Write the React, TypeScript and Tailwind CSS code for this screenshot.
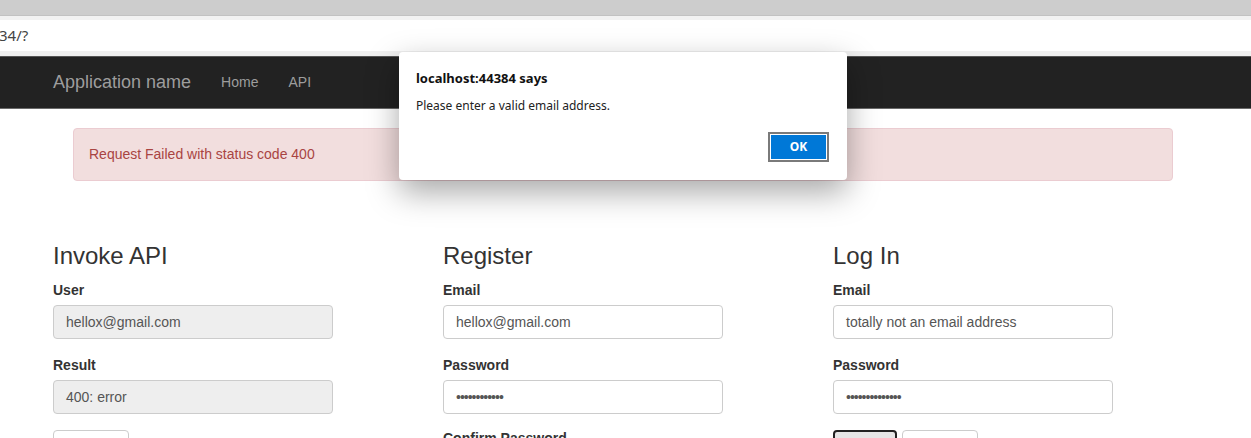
import React from "react";

const sans = "font-['Liberation_Sans',Arial,sans-serif]";
const ui = "font-['Noto_Sans','Open_Sans',sans-serif]";

function Field({ label, value, disabled = false, password = false }: { label: string; value: string; disabled?: boolean; password?: boolean }) {
  return (
    <div className="mb-[16px]">
      <label className="block text-[14px] leading-[20px] font-bold text-[#333] mb-[5px]">{label}</label>
      <div
        className={`w-[280px] h-[34px] px-[12px] flex items-center rounded-[4px] border border-[#ccc] text-[14px] text-[#555] ${
          disabled ? "bg-[#eee]" : "bg-white"
        } ${password ? "tracking-[-1px] text-[11px]" : ""}`}
      >
        {value}
      </div>
    </div>
  );
}

function Btn({ children, w, focus = false }: { children: React.ReactNode; w: string; focus?: boolean }) {
  return (
    <div
      className={`${w} h-[34px] rounded-[4px] text-[14px] text-[#333] flex items-center justify-center ${
        focus ? "border-2 border-[#222] bg-[#e6e6e6]" : "border border-[#ccc] bg-white"
      }`}
    >
      {children}
    </div>
  );
}

export default function App() {
  return (
    <div className={`relative w-[1251px] h-[438px] overflow-hidden bg-white ${sans}`}>
      {/* browser chrome */}
      <div className="h-[15px] bg-[#cdcdcd]" />
      <div className="h-[1px] bg-[#c2c2c2]" />
      <div className="h-[4px] bg-[#f2f2f2]" />
      <div className={`h-[31px] bg-white flex items-center text-[15px] text-[#444] ${ui}`}>
        <span className="-ml-[1px]">34/?</span>
      </div>
      <div className="h-[5px] bg-[#f0f0f0]" />

      {/* navbar */}
      <div className="h-[53px] bg-[#222] border-t border-[#555] border-b border-b-[#6a6a6a] flex items-center pl-[53px]">
        <span className="text-[18px] text-[#9d9d9d] mr-[30px]">Application name</span>
        <span className="text-[14px] text-[#9d9d9d] mr-[30px]">Home</span>
        <span className="text-[14px] text-[#9d9d9d]">API</span>
      </div>

      {/* alert */}
      <div className="mt-[19px] ml-[73px] w-[1100px] h-[53px] rounded-[4px] bg-[#f2dede] border border-[#ebccd1] flex items-center px-[15px] text-[14px] text-[#a94442]">
        Request Failed with status code 400
      </div>

      {/* columns */}
      <div className="flex pl-[53px] mt-[62px]">
        <div className="w-[390px]">
          <h3 className="text-[24px] leading-[26px] text-[#333] mb-[11px]">Invoke API</h3>
          <Field label="User" value="hellox@gmail.com" disabled />
          <Field label="Result" value="400: error" disabled />
          <div className="flex">
            <Btn w="w-[76px]">Invoke</Btn>
          </div>
        </div>
        <div className="w-[390px]">
          <h3 className="text-[24px] leading-[26px] text-[#333] mb-[11px]">Register</h3>
          <Field label="Email" value="hellox@gmail.com" />
          <Field label="Password" value="••••••••••••" password />
          <label className="block text-[14px] leading-[20px] font-bold text-[#333] -mt-[2px]">Confirm Password</label>
        </div>
        <div className="w-[390px]">
          <h3 className="text-[24px] leading-[26px] text-[#333] mb-[11px]">Log In</h3>
          <Field label="Email" value="totally not an email address" />
          <Field label="Password" value="••••••••••••••" password />
          <div className="flex gap-[5px]">
            <Btn w="w-[64px]" focus>Log In</Btn>
            <Btn w="w-[76px]">Log Out</Btn>
          </div>
        </div>
      </div>

      {/* alert dialog */}
      <div className={`absolute left-[399px] top-[52px] w-[448px] h-[128px] bg-white rounded-[4px] shadow-[0_12px_32px_rgba(0,0,0,0.35)] ${ui}`}>
        <div className="pt-[17px] pl-[17px] text-[13px] font-bold text-[#111] leading-[18px]">localhost:44384 says</div>
        <div className="pt-[10px] pl-[17px] text-[12px] text-[#222] leading-[18px]">Please enter a valid email address.</div>
        <div className="flex justify-end pr-[18px] pt-[17px]">
          <div className="w-[61px] h-[30px] border-2 border-[#7a7a7a] p-[1px] bg-white">
            <div className="w-full h-full bg-[#0078d7] text-white text-[12px] font-bold flex items-center justify-center">OK</div>
          </div>
        </div>
      </div>
    </div>
  );
}
